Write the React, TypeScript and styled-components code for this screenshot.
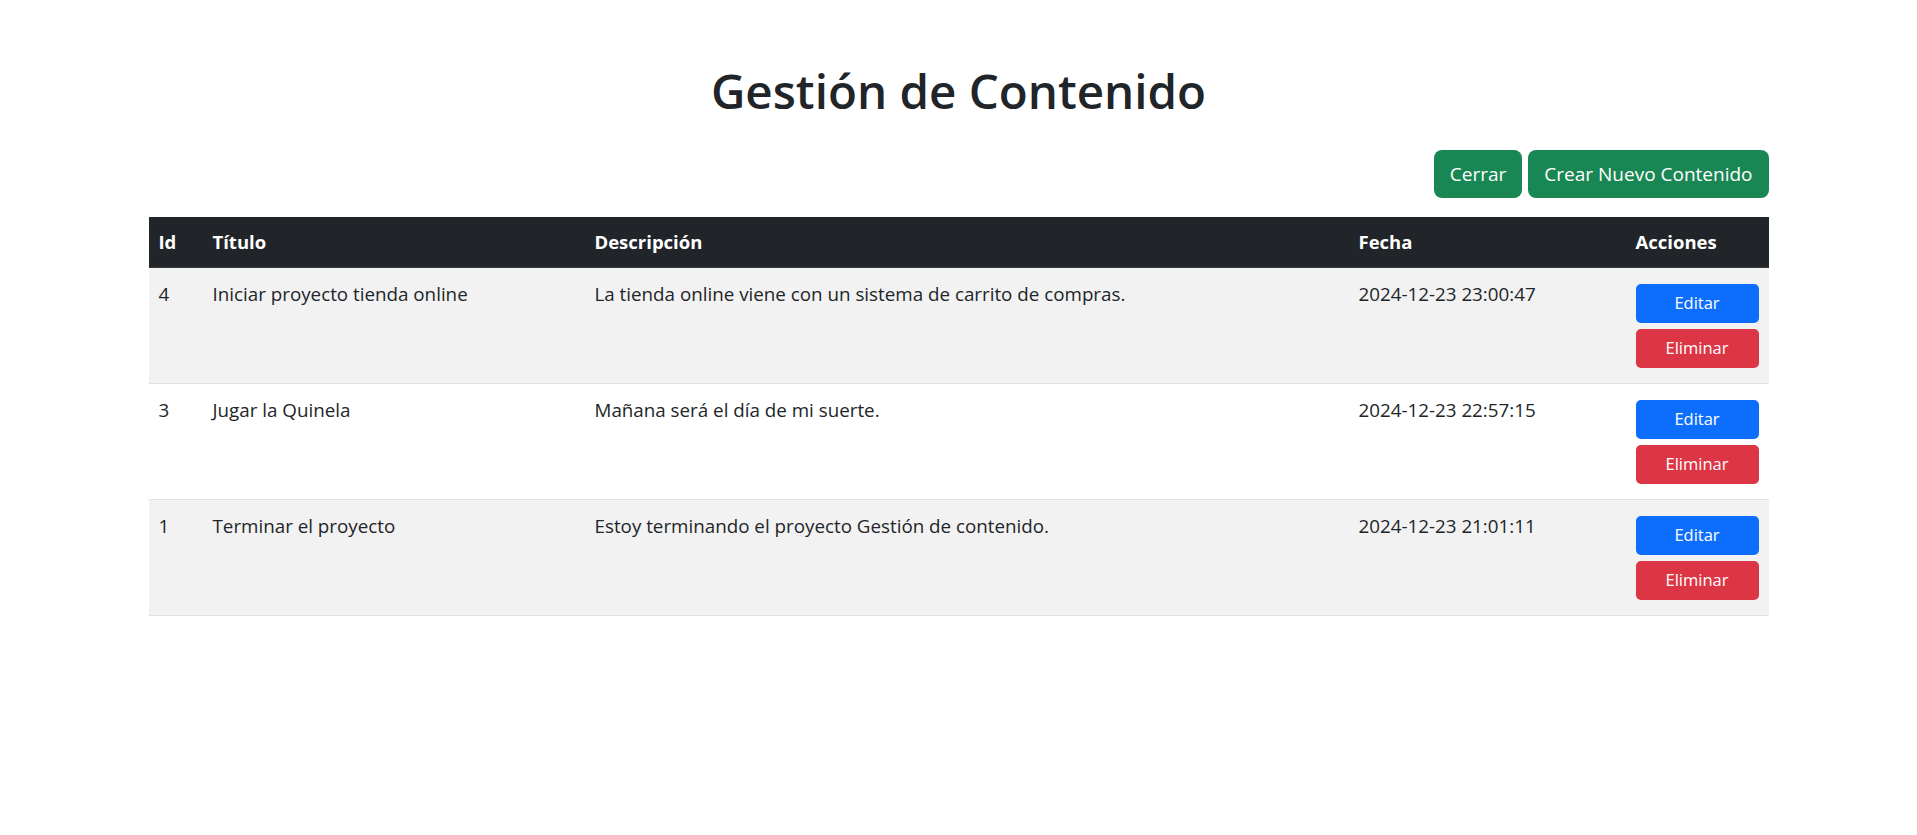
import React from "react";
import styled, { createGlobalStyle } from "styled-components";

const GlobalStyle = createGlobalStyle`
  * { box-sizing: border-box; }
  body {
    margin: 0;
    background: #ffffff;
    color: #212529;
    font-family: "Open Sans", "Noto Sans", sans-serif;
    font-size: 19px;
    line-height: 1.5;
  }
`;

const Page = styled.div`
  max-width: 1620px;
  margin: 0 auto;
  padding-top: 62px;
`;

const Title = styled.h1`
  margin: 0 0 31px;
  text-align: center;
  font-size: 47.5px;
  line-height: 1.2;
  font-weight: 600;
  color: #212529;
`;

const Toolbar = styled.div`
  display: flex;
  justify-content: flex-end;
  gap: 6px;
  margin-bottom: 19px;
`;

const LargeButton = styled.button`
  height: 48px;
  padding: 0 16px;
  border: none;
  border-radius: 8px;
  background: #198754;
  color: #ffffff;
  font-family: inherit;
  font-size: 19px;
  line-height: 1.5;
  cursor: pointer;
`;

const Table = styled.table`
  width: 100%;
  border-collapse: collapse;
  table-layout: fixed;
`;

const HeadRow = styled.tr`
  background: #212529;
  color: #ffffff;
  border-bottom: 1px solid #373b3e;
`;

const Th = styled.th<{ $w: number }>`
  width: ${(p) => p.$w}px;
  padding: 10px;
  text-align: left;
  font-weight: 700;
  font-size: 18.5px;
  line-height: 30px;
`;

const Row = styled.tr<{ $striped: boolean }>`
  background: ${(p) => (p.$striped ? "#f2f2f2" : "#ffffff")};
  border-bottom: 1px solid #dee2e6;
`;

const Td = styled.td`
  padding: 11px 10px 9px;
  vertical-align: top;
  font-size: 18.8px;
  line-height: 30px;
  color: #212529;
`;

const ActionTd = styled.td`
  padding: 10px;
  vertical-align: top;
`;

const ActionStack = styled.div`
  display: flex;
  flex-direction: column;
  gap: 6px;
  padding: 6px 0 5px;
`;

const SmallButton = styled.button<{ $variant: "primary" | "danger" }>`
  width: 100%;
  height: 39px;
  border: none;
  border-radius: 5px;
  background: ${(p) => (p.$variant === "primary" ? "#0d6efd" : "#dc3545")};
  color: #ffffff;
  font-family: inherit;
  font-size: 16.5px;
  line-height: 1.5;
  cursor: pointer;
`;

const rows = [
  {
    id: 4,
    titulo: "Iniciar proyecto tienda online",
    descripcion: "La tienda online viene con un sistema de carrito de compras.",
    fecha: "2024-12-23 23:00:47",
  },
  {
    id: 3,
    titulo: "Jugar la Quinela",
    descripcion: "Mañana será el día de mi suerte.",
    fecha: "2024-12-23 22:57:15",
  },
  {
    id: 1,
    titulo: "Terminar el proyecto",
    descripcion: "Estoy terminando el proyecto Gestión de contenido.",
    fecha: "2024-12-23 21:01:11",
  },
];

export default function App() {
  return (
    <>
      <GlobalStyle />
      <Page>
        <Title>Gestión de Contenido</Title>
        <Toolbar>
          <LargeButton>Cerrar</LargeButton>
          <LargeButton>Crear Nuevo Contenido</LargeButton>
        </Toolbar>
        <Table>
          <thead>
            <HeadRow>
              <Th $w={54}>Id</Th>
              <Th $w={382}>Título</Th>
              <Th $w={764}>Descripción</Th>
              <Th $w={277}>Fecha</Th>
              <Th $w={143}>Acciones</Th>
            </HeadRow>
          </thead>
          <tbody>
            {rows.map((r, i) => (
              <Row key={r.id} $striped={i % 2 === 0}>
                <Td>{r.id}</Td>
                <Td>{r.titulo}</Td>
                <Td>{r.descripcion}</Td>
                <Td>{r.fecha}</Td>
                <ActionTd>
                  <ActionStack>
                    <SmallButton $variant="primary">Editar</SmallButton>
                    <SmallButton $variant="danger">Eliminar</SmallButton>
                  </ActionStack>
                </ActionTd>
              </Row>
            ))}
          </tbody>
        </Table>
      </Page>
    </>
  );
}
